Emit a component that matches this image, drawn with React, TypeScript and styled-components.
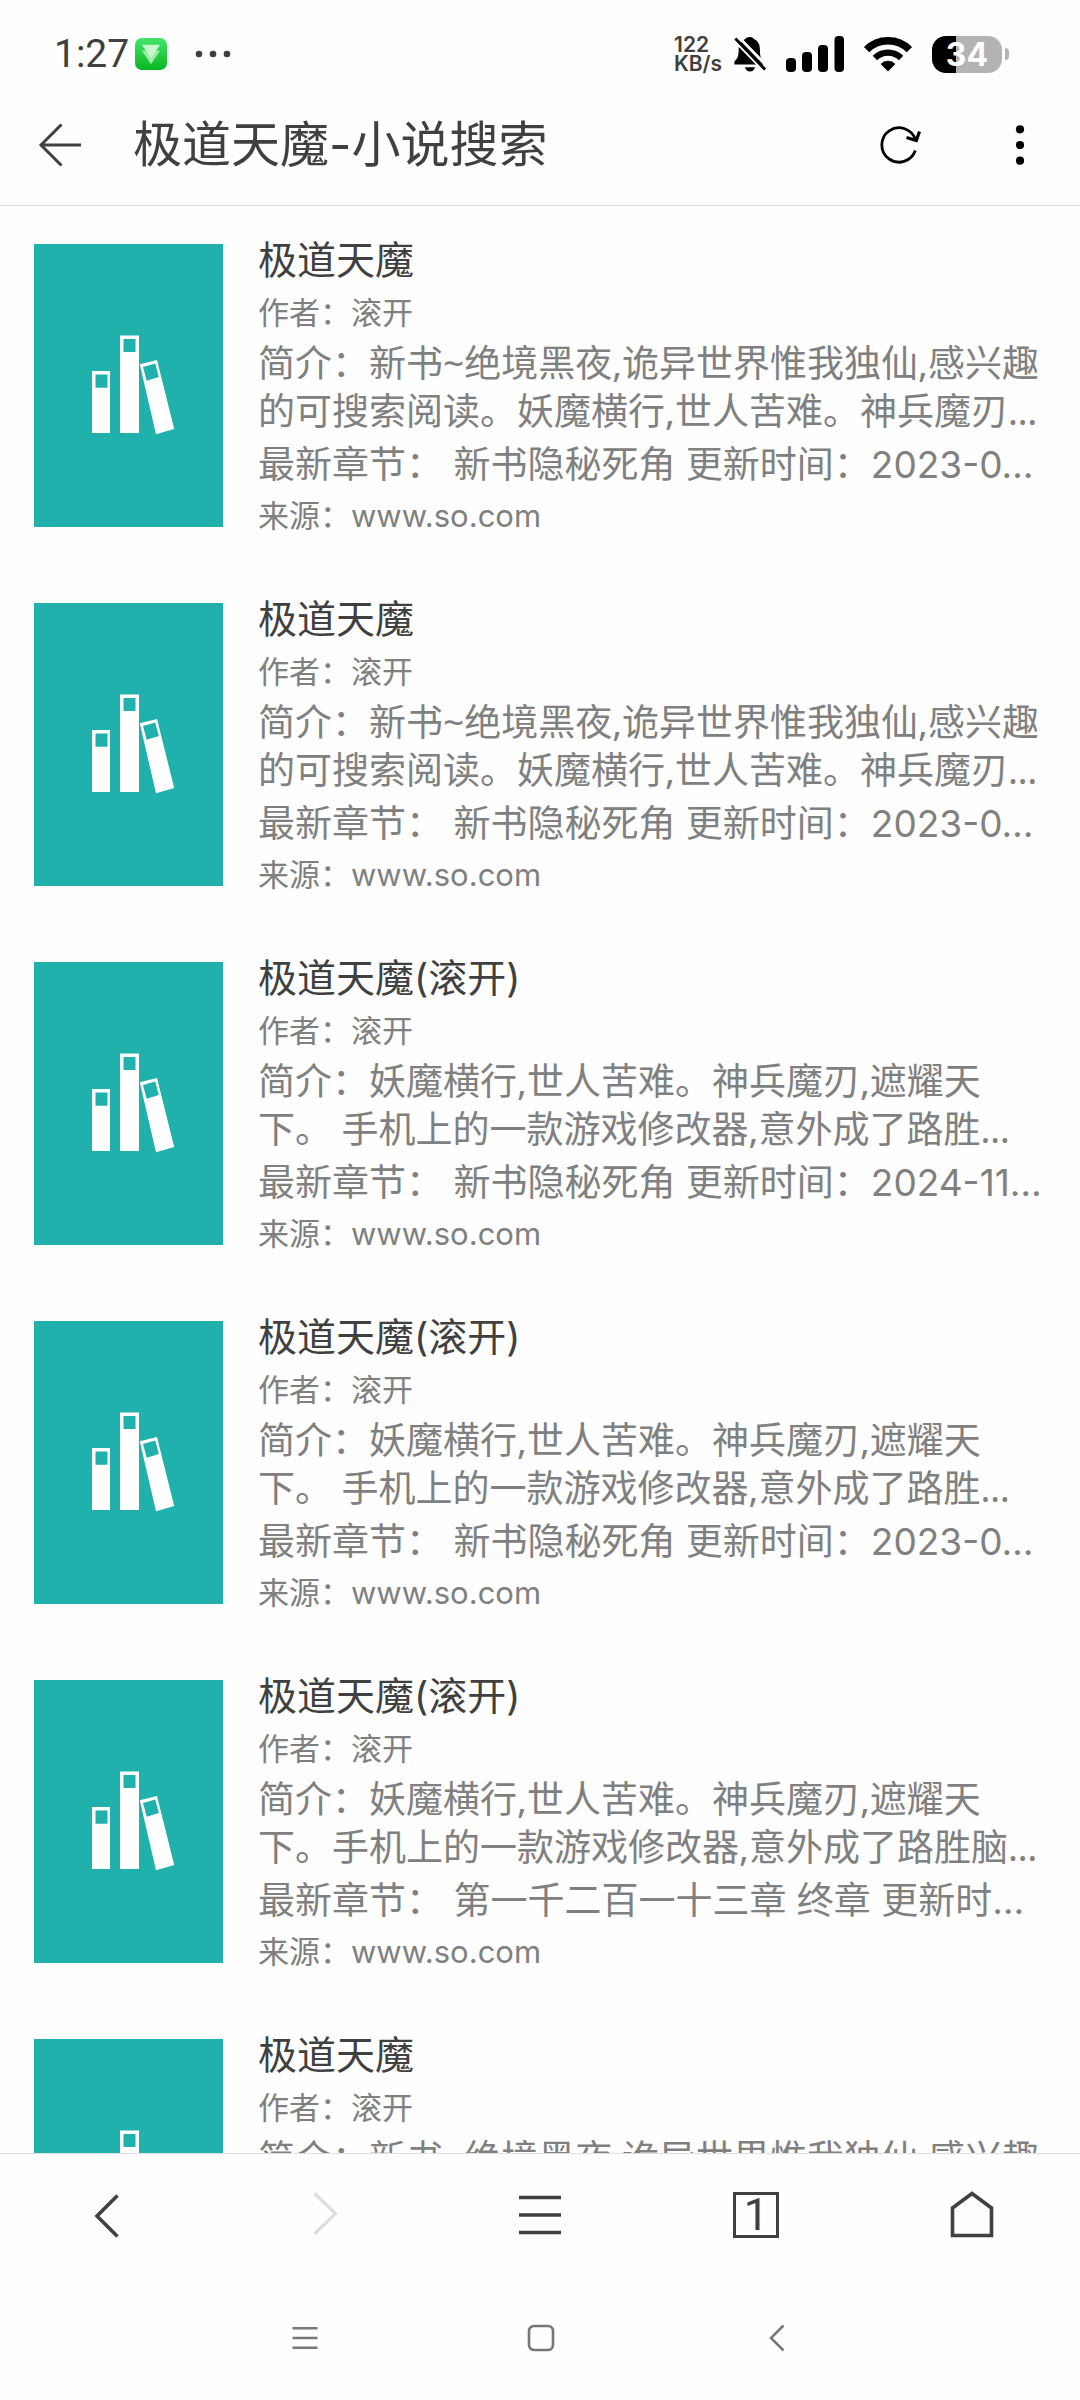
import React from "react";
import styled, { createGlobalStyle } from "styled-components";

const GlobalStyle = createGlobalStyle`
  *, *::before, *::after { box-sizing: border-box; }
  body {
    margin: 0;
    background: #fefefe;
    color: #404040;
    font-family: Inter, "Noto Sans CJK SC", sans-serif;
  }
  h1, h2, p, ul { margin: 0; padding: 0; font-weight: 400; }
  svg { display: block; flex: none; }
`;

const Screen = styled.div`
  display: flex;
  flex-direction: column;
  height: 100vh;
`;

/* ---------- status bar ---------- */

const StatusBar = styled.div`
  flex: none;
  display: flex;
  align-items: center;
  justify-content: space-between;
  height: 84px;
  padding: 24px 78px 0 54px;
`;

const StatusGroup = styled.div<{ $gap: number }>`
  display: flex;
  align-items: center;
  gap: ${(p) => p.$gap}px;
`;

const Clock = styled.span`
  font: 400 39px/48px Roboto, sans-serif;
`;

const NetSpeed = styled.span`
  display: flex;
  flex-direction: column;
  width: 49px;
  font-size: 21px;
  font-weight: 600;
  line-height: 19px;
`;

const Battery = styled.span`
  position: relative;
  display: flex;
  align-items: center;
  justify-content: center;
  width: 70px;
  height: 37px;
  border-radius: 14px;
  background: linear-gradient(to right, #000 35%, #b3b3b3 35%);
  color: #fff;
  font-size: 32px;
  font-weight: 700;
  line-height: 37px;

  &::after {
    content: "";
    position: absolute;
    left: 73px;
    top: 12px;
    width: 4px;
    height: 12px;
    border-radius: 0 6px 6px 0;
    background: #b3b3b3;
  }
`;

/* ---------- page header ---------- */

const Header = styled.header`
  flex: none;
  display: flex;
  align-items: center;
  height: 122px;
  padding: 0 28px;
  border-bottom: 1px solid #d6d6d6;
`;

const IconButton = styled.button`
  display: flex;
  align-items: center;
  justify-content: center;
  width: 64px;
  height: 64px;
  padding: 0;
  border: 0;
  background: none;
  color: inherit;
`;

const PageTitle = styled.h1`
  flex: 1;
  padding-left: 41px;
  font-size: 49px;
  line-height: 64px;
`;

const HeaderActions = styled.div`
  display: flex;
  gap: 56px;
`;

/* ---------- results ---------- */

const Results = styled.main`
  flex: 1;
  min-height: 0;
  overflow-y: auto;
  scrollbar-width: none;
`;

const BookList = styled.ul`
  list-style: none;
  padding: 27px 34px 0;
`;

const BookLink = styled.a`
  display: flex;
  align-items: flex-start;
  gap: 35px;
  padding-bottom: 55px;
  color: #808080;
  text-decoration: none;
`;

const Cover = styled.svg`
  margin-top: 11px;
  background: #21b1ac;
`;

const Info = styled.div`
  flex: 1;
  min-width: 0;
  white-space: nowrap;
`;

const BookTitle = styled.h2`
  color: #404040;
  font-size: 39px;
  line-height: 54px;
`;

const Meta = styled.p<{ $line: number }>`
  font-size: 31px;
  line-height: ${(p) => p.$line}px;
`;

const Summary = styled.p`
  font-family: "Noto Sans", "Noto Sans CJK SC", sans-serif;
  font-size: 37px;
  line-height: 48px;
  white-space: pre-line;
`;

const Latest = styled.p`
  font-size: 37px;
  line-height: 59px;
`;

/* ---------- bottom bars ---------- */

const BrowserBar = styled.nav`
  flex: none;
  display: grid;
  grid-template-columns: repeat(5, 1fr);
  justify-items: center;
  align-items: center;
  height: 122px;
  border-top: 1px solid #e0e0e0;
`;

const TabCount = styled.span`
  display: flex;
  align-items: center;
  justify-content: center;
  width: 46px;
  height: 46px;
  border: 3px solid #404040;
  font: 400 44px/40px Roboto, sans-serif;
`;

const SystemBar = styled.nav`
  flex: none;
  display: flex;
  justify-content: center;
  align-items: center;
  gap: 172px;
  height: 125px;
  padding-left: 2px;
  color: #777;
`;

type Book = { title: string; summary: string; latest: string };

const newBook =
  "简介：新书~绝境黑夜,诡异世界惟我独仙,感兴趣\n的可搜索阅读。妖魔横行,世人苦难。神兵魔刃…";
const modifier =
  "简介：妖魔横行,世人苦难。神兵魔刃,遮耀天\n下。 手机上的一款游戏修改器,意外成了路胜…";

const books: Book[] = [
  { title: "极道天魔", summary: newBook, latest: "新书隐秘死角 更新时间：2023-0…" },
  { title: "极道天魔", summary: newBook, latest: "新书隐秘死角 更新时间：2023-0…" },
  { title: "极道天魔(滚开)", summary: modifier, latest: "新书隐秘死角 更新时间：2024-11…" },
  { title: "极道天魔(滚开)", summary: modifier, latest: "新书隐秘死角 更新时间：2023-0…" },
  {
    title: "极道天魔(滚开)",
    summary:
      "简介：妖魔横行,世人苦难。神兵魔刃,遮耀天\n下。手机上的一款游戏修改器,意外成了路胜脑…",
    latest: "第一千二百一十三章 终章 更新时…",
  },
  { title: "极道天魔", summary: newBook, latest: "新书隐秘死角 更新时间：2023-0…" },
];

const BookCover = () => (
  <Cover width="189" height="283" viewBox="0 0 189 283" aria-hidden="true">
    <path
      fill="#fff"
      fillRule="evenodd"
      d="M58 127h18v62H58zM61.5 130.5v13.300h12v-13.300zM86 91.500h19V189H86zM89.5 95v13h12V95zM105.8 120.300L123 116L140.2 185L122 190.300zM109 122.900L112.7 136.700L124.8 133L121.3 119.500z"
    />
  </Cover>
);

const AppBadge = () => (
  <svg width="32" height="32" viewBox="0 0 33 33" aria-hidden="true">
    <defs>
      <linearGradient id="badge" x1="0" y1="0" x2="0" y2="1">
        <stop offset="0" stopColor="#42e668" />
        <stop offset="1" stopColor="#08b522" />
      </linearGradient>
    </defs>
    <rect width="33" height="33" rx="7" fill="url(#badge)" />
    <path d="M7 13h19L16.500 27z" fill="#9aeda6" />
    <path d="M7 7h19l-9.500 14z" fill="#c9f7cf" />
  </svg>
);

const MutedBell = () => (
  <svg width="34" height="36" viewBox="0 0 36 38" aria-hidden="true">
    <path d="M18 1c2.500 0 3.500 1 4.500 2.500C27 5.500 28.500 10 28.500 14c0 8 1 10 4 13v3H1.500v-3c3-3 4.500-5 4.500-13 0-4 2-8.500 6.500-10.500C13.500 2 15 1 18 1z" />
    <path d="M12.500 33h11c-1 3-3 4.500-5.500 4.500s-4.500-1.500-5.500-4.500z" />
    <path d="M1 4l33 34M4-1l34 35" stroke="#fefefe" strokeWidth="3" />
    <path d="M2.500 2.500L34 35.500" stroke="#000" strokeWidth="3" />
  </svg>
);

const Signal = () => (
  <svg width="58" height="36" viewBox="0 0 58 36" aria-hidden="true">
    <rect x="0" y="22" width="10" height="14" rx="4" />
    <rect x="16" y="16" width="10" height="20" rx="4" />
    <rect x="32" y="9" width="10" height="27" rx="4" />
    <rect x="48.500" y="0" width="9.500" height="36" rx="4" />
  </svg>
);

const Wifi = () => (
  <svg width="50" height="36" viewBox="0 0 52 38" fill="none" stroke="#000" aria-hidden="true">
    <path d="M3.400 14.400A32 32 0 0 1 48.600 14.400" strokeWidth="8" />
    <path d="M12.200 23.200A19.500 19.500 0 0 1 39.800 23.200" strokeWidth="6.500" />
    <path d="M26 37.500L18.200 29.500A11 11 0 0 1 33.800 29.500Z" fill="#000" stroke="none" />
  </svg>
);

export default function App() {
  return (
    <>
      <GlobalStyle />
      <Screen>
        <StatusBar>
          <StatusGroup $gap={6}>
            <Clock>1:27</Clock>
            <AppBadge />
            <svg width="60" height="34" viewBox="0 0 60 34" fill="#404040" aria-hidden="true">
              <circle cx="26" cy="17" r="3.300" />
              <circle cx="40" cy="17" r="3.300" />
              <circle cx="54" cy="17" r="3.300" />
            </svg>
          </StatusGroup>
          <StatusGroup $gap={19}>
            <StatusGroup $gap={10}>
              <NetSpeed>
                <span>122</span>
                <span>KB/s</span>
              </NetSpeed>
              <MutedBell />
            </StatusGroup>
            <Signal />
            <Wifi />
            <Battery>34</Battery>
          </StatusGroup>
        </StatusBar>

        <Header>
          <IconButton type="button" aria-label="返回">
            <svg width="44" height="44" viewBox="0 0 44 44" fill="none" stroke="#404040" strokeWidth="3">
              <path d="M43 22H3M23.500 1.500L3 22l20.500 20.500" />
            </svg>
          </IconButton>
          <PageTitle>极道天魔-小说搜索</PageTitle>
          <HeaderActions>
            <IconButton type="button" aria-label="刷新">
              <svg width="44" height="44" viewBox="0 0 44 44" fill="none" stroke="#000" strokeWidth="2.800">
                <path d="M37.300 27.500A17.200 17.200 0 1 1 37.500 17" />
                <path d="M28.500 14.500l9.800 3L41.500 8.500" strokeWidth="3.200" />
              </svg>
            </IconButton>
            <IconButton type="button" aria-label="更多">
              <svg width="44" height="44" viewBox="0 0 44 44" fill="#000">
                <circle cx="22" cy="6.300" r="4.100" />
                <circle cx="22" cy="22" r="4.100" />
                <circle cx="22" cy="37.700" r="4.100" />
              </svg>
            </IconButton>
          </HeaderActions>
        </Header>

        <Results>
          <BookList>
            {books.map((book, i) => (
              <li key={i}>
                <BookLink href="#">
                  <BookCover />
                  <Info>
                    <BookTitle>{book.title}</BookTitle>
                    <Meta $line={52}>作者：滚开</Meta>
                    <Summary>{book.summary}</Summary>
                    <Latest>最新章节： {book.latest}</Latest>
                    <Meta $line={43}>来源：www.so.com</Meta>
                  </Info>
                </BookLink>
              </li>
            ))}
          </BookList>
        </Results>

        <BrowserBar>
          <IconButton type="button" aria-label="后退">
            <svg width="48" height="48" viewBox="0 0 48 48" fill="none" stroke="#404040" strokeWidth="3.600">
              <path d="M33.500 4.500L13 25l20.500 20.500" />
            </svg>
          </IconButton>
          <IconButton type="button" aria-label="前进" disabled>
            <svg width="48" height="48" viewBox="0 0 48 48" fill="none" stroke="#dedede" strokeWidth="3.200">
              <path d="M14.500 2.500L35.500 22.500 14.500 43" />
            </svg>
          </IconButton>
          <IconButton type="button" aria-label="菜单">
            <svg width="48" height="48" viewBox="0 0 48 48" fill="none" stroke="#404040" strokeWidth="3.600">
              <path d="M3 6.500h42M3 24h42M3 41.500h42" />
            </svg>
          </IconButton>
          <IconButton type="button" aria-label="标签页">
            <TabCount>1</TabCount>
          </IconButton>
          <IconButton type="button" aria-label="主页">
            <svg width="48" height="48" viewBox="0 0 48 48" fill="none" stroke="#404040" strokeWidth="3.600">
              <path d="M4.500 44.500V17L24 2.500 43.500 17v27.500z" />
            </svg>
          </IconButton>
        </BrowserBar>

        <SystemBar>
          <IconButton type="button" aria-label="最近任务">
            <svg width="28" height="28" viewBox="0 0 28 28" fill="none" stroke="currentColor" strokeWidth="2.500">
              <path d="M1.500 4.300h25M1.500 14h25M1.500 23.700h25" />
            </svg>
          </IconButton>
          <IconButton type="button" aria-label="主屏幕">
            <svg width="28" height="28" viewBox="0 0 28 28" fill="none" stroke="currentColor" strokeWidth="2.600">
              <rect x="2" y="2" width="24" height="24" rx="5" />
            </svg>
          </IconButton>
          <IconButton type="button" aria-label="系统返回">
            <svg width="28" height="28" viewBox="0 0 28 28" fill="none" stroke="currentColor" strokeWidth="2.500">
              <path d="M20.500 1.500L8 14l12.500 12.500" />
            </svg>
          </IconButton>
        </SystemBar>
      </Screen>
    </>
  );
}
